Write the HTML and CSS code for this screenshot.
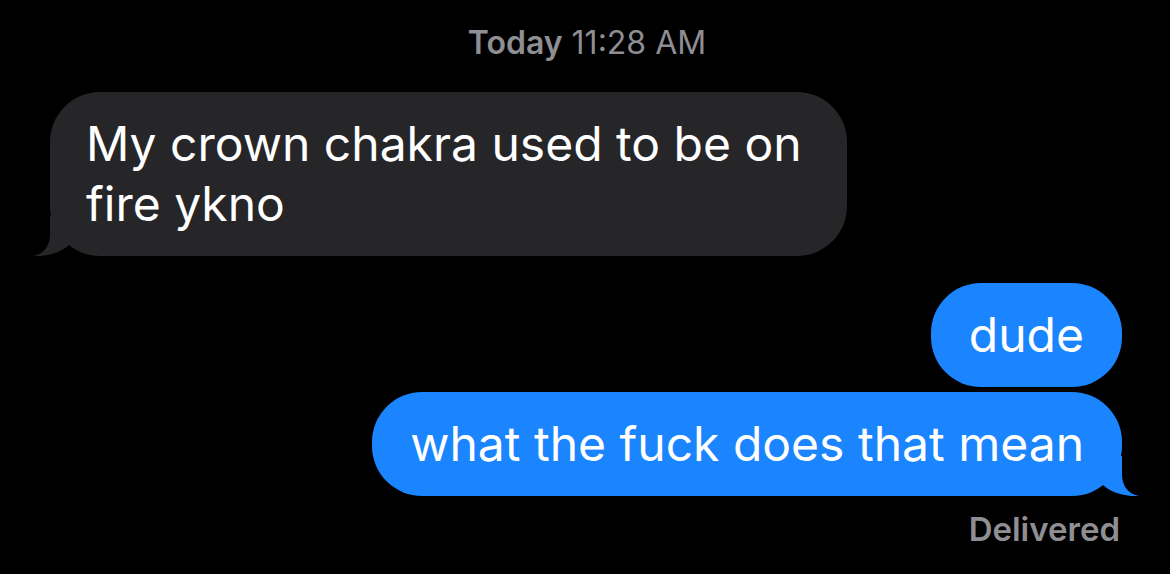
FILE: index.html
```html
<!DOCTYPE html>
<html>
<head>
<meta charset="utf-8">
<link rel="stylesheet" href="styles.css">
</head>
<body>
<div class="thread">
  <div class="stamp"><span class="stamp-day">Today</span> 11:28 AM</div>
  <div class="row row-in">
    <div class="bubble bubble-in">My crown chakra used to be on fire ykno
      <svg class="tail tail-in" viewBox="0 0 40 40" width="40" height="40"><path d="M22 0 L22 18 C22 30 28 38 39 40 C28 41 10 37 2 28 L0 0 Z"/></svg>
    </div>
  </div>
  <div class="row row-out first-out">
    <div class="bubble bubble-out">dude</div>
  </div>
  <div class="row row-out">
    <div class="bubble bubble-out">what the fuck does that mean
      <svg class="tail tail-out" viewBox="0 0 40 40" width="40" height="40"><path d="M22 0 L22 18 C22 30 28 38 39 40 C28 41 10 37 2 28 L0 0 Z"/></svg>
    </div>
  </div>
  <div class="status">Delivered</div>
</div>
</body>
</html>
```

FILE: styles.css
```css
html, body {
  margin: 0;
  padding: 0;
  background: #000;
}
body {
  width: 1170px;
  height: 574px;
  overflow: hidden;
  font-family: "Inter", "Noto Sans", sans-serif;
}
.thread {
  display: flex;
  flex-direction: column;
  padding: 23px 48px 0 50px;
}
.stamp {
  text-align: center;
  color: #8e8e93;
  font-size: 32px;
  line-height: 39px;
  font-weight: 400;
  padding-left: 2px;
}
.stamp-day {
  font-weight: 600;
}
.row {
  display: flex;
}
.row-in {
  justify-content: flex-start;
  margin-top: 30px;
}
.row-out {
  justify-content: flex-end;
  margin-top: 5px;
}
.first-out {
  margin-top: 27px;
}
.bubble {
  position: relative;
  box-sizing: border-box;
  font-size: 48px;
  line-height: 60px;
  color: #fff;
  padding: 22px 38px;
  border-radius: 50px;
}
.bubble-in {
  background: #262629;
  width: 797px;
  padding-left: 36px;
}
.bubble-out {
  background: #1a85ff;
}
.tail {
  position: absolute;
  bottom: 0;
  display: block;
}
.tail-out {
  right: -18px;
  fill: #1a85ff;
}
.tail-in {
  left: -18px;
  fill: #262629;
  transform: scaleX(-1);
}
.status {
  align-self: flex-end;
  margin-top: 13px;
  margin-right: 2px;
  color: #8e8e93;
  font-size: 33px;
  line-height: 40px;
  font-weight: 600;
}
```
